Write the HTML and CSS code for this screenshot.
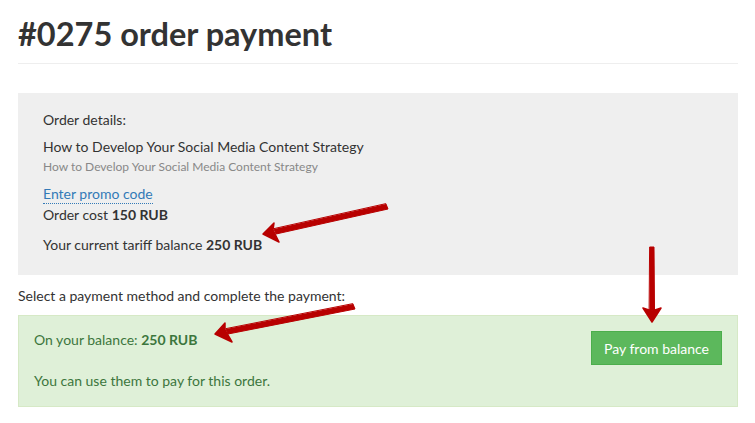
FILE: index.html
```html
<!DOCTYPE html>
<html>
<head>
<meta charset="utf-8">
<link rel="stylesheet" href="styles.css">
</head>
<body>
<div class="page">
  <h1 class="title">#0275 order payment</h1>
  <div class="details">
    <div class="label">Order details:</div>
    <div class="item-name">How to Develop Your Social Media Content Strategy</div>
    <div class="item-sub">How to Develop Your Social Media Content Strategy</div>
    <a class="promo">Enter promo code</a>
    <div class="cost">Order cost <b>150 RUB</b></div>
    <div class="tariff">Your current tariff balance <b>250 RUB</b></div>
  </div>
  <div class="select">Select a payment method and complete the payment:</div>
  <div class="balance">
    <div class="balance-text">
      <div class="on-balance">On your balance: <b>250 RUB</b></div>
      <div class="use">You can use them to pay for this order.</div>
    </div>
    <button class="pay">Pay from balance</button>
  </div>
  <svg class="arrows" width="755" height="423" viewBox="0 0 755 423">
    <g fill="#b80000" stroke="#b80000" stroke-linejoin="round" stroke-linecap="round">
      <polygon points="386,204 388,209 276,234 274,229" stroke-width="1"/>
      <polygon points="263,234 274,223 273,230 279,242" stroke-width="1.5"/>
      <polygon points="353,304 355,309 228,334 226,329" stroke-width="1"/>
      <polygon points="215,334 225,323 225,330 232,342" stroke-width="1.5"/>
      <polygon points="650,247 654,247 654.5,310 649.5,310" stroke-width="1"/>
      <polygon points="652,322 643,308 652,311 661,308" stroke-width="1.5"/>
    </g>
  </svg>
</div>
</body>
</html>
```
FILE: styles.css
```css
html, body {
  margin: 0;
  padding: 0;
  background: #fff;
}
body {
  font-family: Lato, "Open Sans", sans-serif;
  color: #333;
  font-size: 14px;
}
.page {
  position: relative;
  width: 720px;
  padding: 0 17px 0 18px;
}
.title {
  margin: 0;
  padding: 15px 0 11px;
  font-size: 32.5px;
  line-height: 37px;
  font-weight: 700;
  color: #333;
  border-bottom: 1px solid #eee;
}
.details {
  margin-top: 29px;
  background: #efefef;
  padding: 17px 25px 20px;
  line-height: 20px;
}
.label {
  margin-bottom: 7px;
}
.item-sub {
  font-size: 12px;
  line-height: 18px;
  color: #888;
  margin-top: 1px;
  margin-bottom: 8px;
}
.promo {
  color: #337ab7;
  border-bottom: 1px dotted #337ab7;
  text-decoration: none;
  line-height: 18px;
  display: inline-block;
  margin-bottom: 1px;
}
.cost {
  margin-bottom: 10px;
}
b {
  font-weight: 700;
}
.select {
  margin-top: 11px;
  line-height: 20px;
  margin-bottom: 9px;
}
.balance {
  display: flex;
  justify-content: space-between;
  align-items: flex-start;
  background: #dff0d8;
  border: 1px solid #d6e9c6;
  color: #3c763d;
  padding: 14px 15px 15px 15px;
}
.balance-text {
  line-height: 20px;
}
.on-balance {
  margin-bottom: 21px;
}
.pay {
  margin-top: 1px;
  background: #5cb85c;
  border: 1px solid #4cae4c;
  color: #fff;
  font-family: inherit;
  font-size: 14px;
  height: 34px;
  padding: 0 12px;
  border-radius: 0;
}
.arrows {
  position: absolute;
  left: 0;
  top: 0;
  pointer-events: none;
}
```
